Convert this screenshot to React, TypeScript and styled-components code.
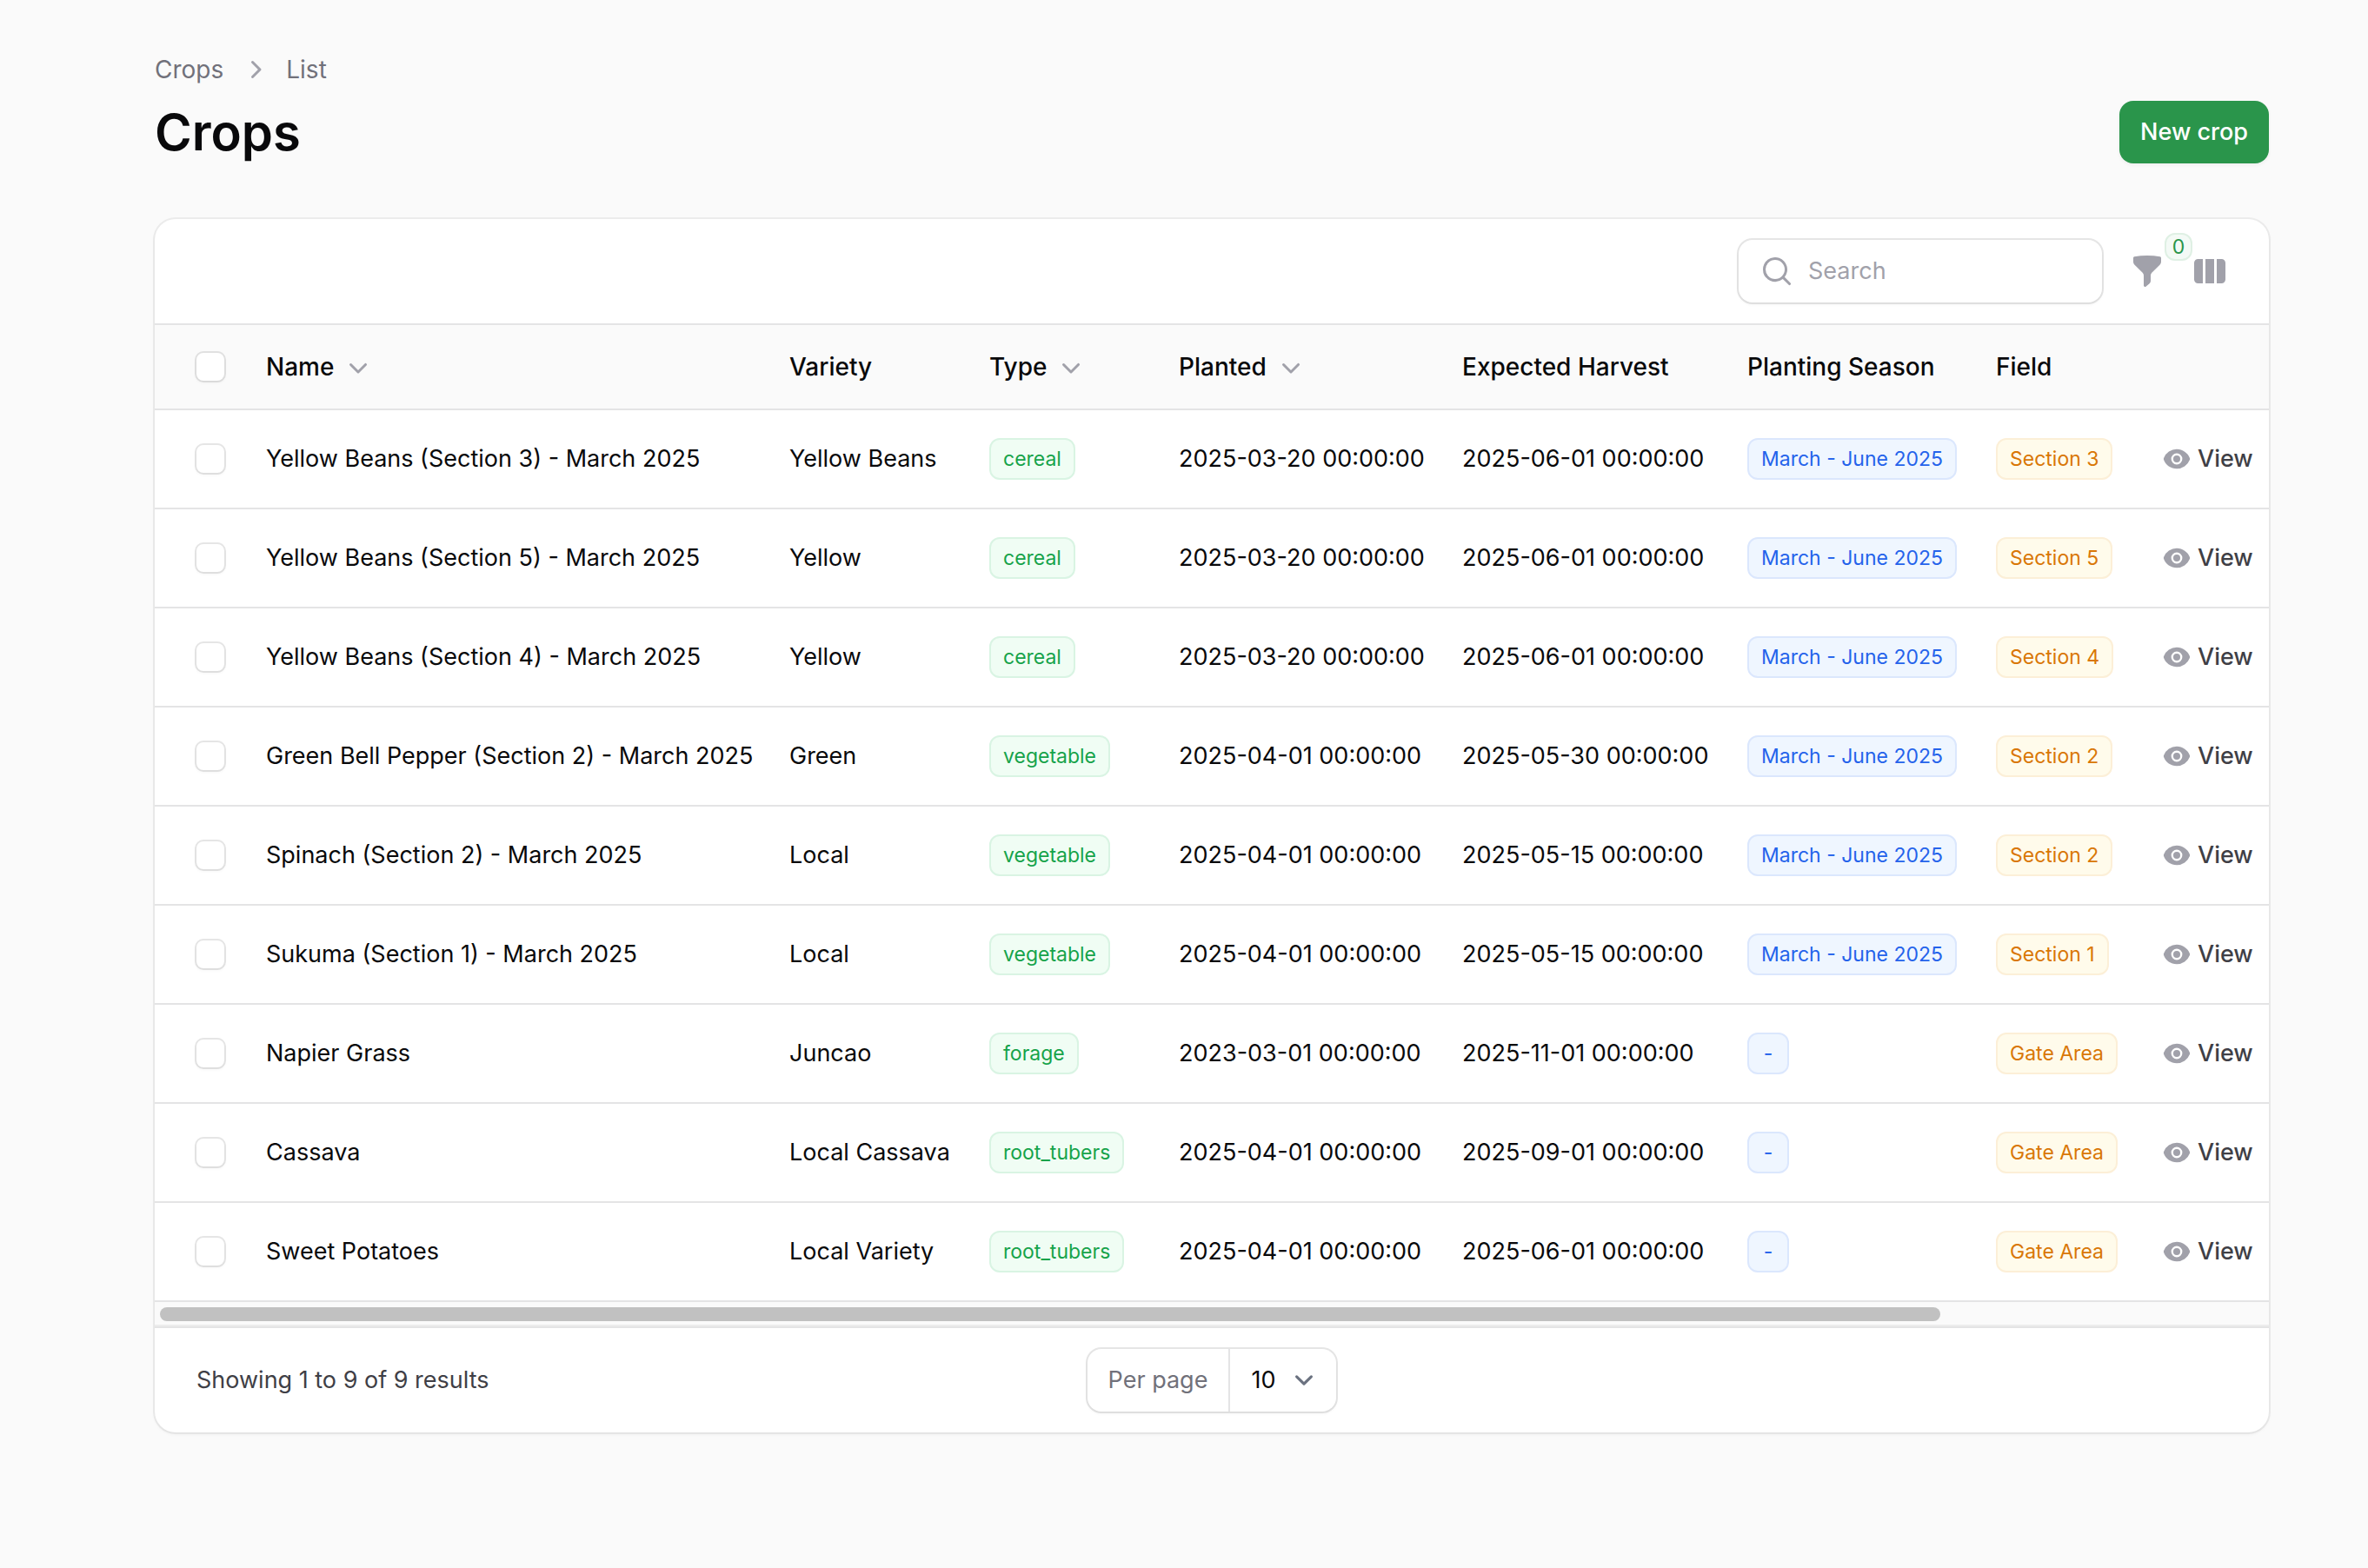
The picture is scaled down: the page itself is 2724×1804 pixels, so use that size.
import React, { useEffect, useRef, useState } from 'react';
import styled, { createGlobalStyle, css } from 'styled-components';

const ink = '#09090b';
const line = '#e4e4e5';
const muted = '#71717a';
const iconGray = '#a1a1aa';
const brand = '#2a954b';
const ring = '0 0 0 2px rgba(9, 9, 11, 0.1), 0 2px 4px rgba(0, 0, 0, 0.05)';

const GlobalStyle = createGlobalStyle`
  *, *::before, *::after { box-sizing: border-box; }
  body {
    margin: 0;
    background: #fafafa;
    color: ${ink};
    font-family: Inter, 'Liberation Sans', sans-serif;
    font-size: 27px;
    line-height: 40px;
  }
  button, input, select { font: inherit; color: inherit; }
  h1, ol { margin: 0; padding: 0; }
`;

const Page = styled.main`
  display: flex;
  flex-direction: column;
  gap: 64px;
  padding: 60px 114px 60px 178px;
`;

const PageHeader = styled.header`
  display: flex;
  align-items: flex-end;
  justify-content: space-between;
`;

const Heading = styled.div`
  display: flex;
  flex-direction: column;
  gap: 16px;
`;

const Breadcrumbs = styled.ol`
  display: flex;
  align-items: center;
  gap: 16px;
  list-style: none;
`;

const Crumb = styled.li`
  display: flex;
  align-items: center;
  gap: 16px;
`;

const CrumbLink = styled.a`
  color: ${muted};
  font-size: 28px;
  text-decoration: none;
`;

const Title = styled.h1`
  font-size: 58px;
  line-height: 72px;
  font-weight: 600;
`;

const PrimaryButton = styled.button`
  height: 72px;
  padding: 0 24px;
  border: 0;
  border-radius: 16px;
  background: ${brand};
  color: #fff;
  font-weight: 500;
  box-shadow: 0 2px 4px rgba(0, 0, 0, 0.05);
`;

const Card = styled.section`
  border-radius: 24px;
  background: #fff;
  overflow: hidden;
  box-shadow: 0 0 0 2px rgba(9, 9, 11, 0.06), 0 2px 4px rgba(0, 0, 0, 0.05);
`;

const Toolbar = styled.div`
  display: flex;
  align-items: center;
  justify-content: flex-end;
  gap: 32px;
  padding: 24px 48px;
  border-bottom: 2px solid ${line};
`;

const SearchBox = styled.label`
  display: flex;
  align-items: center;
  gap: 16px;
  width: 418px;
  height: 72px;
  padding: 0 24px;
  border-radius: 16px;
  box-shadow: ${ring};
`;

const SearchInput = styled.input`
  flex: 1;
  min-width: 0;
  padding: 0;
  border: 0;
  outline: 0;
  background: transparent;
  &::placeholder { color: ${iconGray}; opacity: 1; }
`;

const IconButton = styled.button`
  position: relative;
  display: flex;
  padding: 0;
  border: 0;
  background: transparent;
`;

const CountBadge = styled.span`
  position: absolute;
  left: 100%;
  bottom: 80%;
  min-width: 32px;
  height: 32px;
  border: 2px solid #dff0e4;
  border-radius: 12px;
  background: #f4faf6;
  color: ${brand};
  font-size: 23px;
  line-height: 28px;
  text-align: center;
`;

const Icon = styled.svg<{ $size?: number; $color?: string }>`
  flex: none;
  display: block;
  width: ${(p) => p.$size ?? 40}px;
  height: ${(p) => p.$size ?? 40}px;
  fill: ${(p) => p.$color ?? iconGray};
`;

const Scroller = styled.div`
  overflow-x: auto;
  scrollbar-width: none;
`;

const Table = styled.table`
  width: 2874px;
  table-layout: fixed;
  border-collapse: separate;
  border-spacing: 0;
`;

const Col = styled.col<{ $width?: number }>`
  ${(p) => p.$width && css`width: ${p.$width}px;`}
`;

const HeadCell = styled.th<{ $check?: boolean }>`
  height: 98px;
  padding: 0 24px;
  padding-left: ${(p) => (p.$check ? 48 : 24)}px;
  border-bottom: 2px solid ${line};
  background: #fafafa;
  font-size: 28px;
  font-weight: 500;
  text-align: left;
  white-space: nowrap;
`;

const SortButton = styled.button`
  display: flex;
  align-items: center;
  gap: 8px;
  padding: 0;
  border: 0;
  background: transparent;
`;

const Cell = styled.td<{ $check?: boolean }>`
  height: 114px;
  padding: 0 24px;
  padding-left: ${(p) => (p.$check ? 48 : 24)}px;
  border-bottom: 2px solid ${line};
  white-space: nowrap;
`;

const Checkbox = styled.input`
  appearance: none;
  display: block;
  width: 32px;
  height: 32px;
  margin: 0;
  border-radius: 8px;
  background: #fff;
  box-shadow: ${ring};
  &:checked { background: ${brand}; }
`;

type Tone = 'green' | 'blue' | 'amber';
const tones: Record<Tone, [string, string, string]> = {
  green: ['#16a34a', '#f0fdf4', '#d9f4e3'],
  blue: ['#2563eb', '#eff6ff', '#dbe7fd'],
  amber: ['#d97706', '#fffbeb', '#fcefd7'],
};

const Badge = styled.span<{ $tone: Tone }>`
  display: flex;
  align-items: center;
  justify-content: center;
  width: fit-content;
  min-width: 48px;
  height: 48px;
  padding: 0 14px;
  border: 2px solid ${(p) => tones[p.$tone][2]};
  border-radius: 12px;
  background: ${(p) => tones[p.$tone][1]};
  color: ${(p) => tones[p.$tone][0]};
  font-size: 23px;
`;

const ViewLink = styled.a`
  display: flex;
  width: fit-content;
  align-items: center;
  gap: 8px;
  color: #3f3f46;
  font-weight: 500;
  text-decoration: none;
`;

const ScrollTrack = styled.div`
  padding: 6px 6px 4px;
  border-bottom: 2px solid #ececec;
  background: #fafafa;
`;

const ScrollThumb = styled.div`
  height: 16px;
  border-radius: 8px;
  background: #c1c1c1;
`;

const Footer = styled.footer`
  display: grid;
  grid-template-columns: 1fr auto 1fr;
  align-items: center;
  padding: 24px 48px;
  border-top: 2px solid ${line};
`;

const Summary = styled.span`
  color: #3f3f46;
`;

const PerPage = styled.div`
  display: flex;
  height: 72px;
  border-radius: 16px;
  box-shadow: ${ring};
`;

const PerPageLabel = styled.label`
  display: flex;
  align-items: center;
  padding: 0 24px;
  border-right: 2px solid ${line};
  color: ${muted};
`;

const SelectWrap = styled.span`
  display: grid;
  align-items: center;
  justify-items: end;
  padding-right: 16px;
  & > * { grid-area: 1 / 1; }
  & > svg { pointer-events: none; }
`;

const Select = styled.select`
  appearance: none;
  width: 106px;
  height: 72px;
  padding: 0 0 0 24px;
  border: 0;
  outline: 0;
  background: transparent;
`;

const ChevronDown = () => (
  <Icon viewBox="0 0 20 20" aria-hidden="true">
    <path d="M5.22 8.22a.75.75 0 0 1 1.06 0L10 11.94l3.72-3.72a.75.75 0 1 1 1.06 1.06l-4.25 4.25a.75.75 0 0 1-1.06 0L5.22 9.28a.75.75 0 0 1 0-1.06Z" />
  </Icon>
);

const columns: { label: string; width?: number; sortable?: boolean }[] = [
  { label: 'Name', width: 602, sortable: true },
  { label: 'Variety', width: 230 },
  { label: 'Type', width: 218, sortable: true },
  { label: 'Planted', width: 326, sortable: true },
  { label: 'Expected Harvest', width: 328 },
  { label: 'Planting Season', width: 286 },
  { label: 'Field', width: 192 },
];

const season = 'March - June 2025';
const crops = [
  ['Yellow Beans (Section 3) - March 2025', 'Yellow Beans', 'cereal', '2025-03-20', '2025-06-01', season, 'Section 3'],
  ['Yellow Beans (Section 5) - March 2025', 'Yellow', 'cereal', '2025-03-20', '2025-06-01', season, 'Section 5'],
  ['Yellow Beans (Section 4) - March 2025', 'Yellow', 'cereal', '2025-03-20', '2025-06-01', season, 'Section 4'],
  ['Green Bell Pepper (Section 2) - March 2025', 'Green', 'vegetable', '2025-04-01', '2025-05-30', season, 'Section 2'],
  ['Spinach (Section 2) - March 2025', 'Local', 'vegetable', '2025-04-01', '2025-05-15', season, 'Section 2'],
  ['Sukuma (Section 1) - March 2025', 'Local', 'vegetable', '2025-04-01', '2025-05-15', season, 'Section 1'],
  ['Napier Grass', 'Juncao', 'forage', '2023-03-01', '2025-11-01', '-', 'Gate Area'],
  ['Cassava', 'Local Cassava', 'root_tubers', '2025-04-01', '2025-09-01', '-', 'Gate Area'],
  ['Sweet Potatoes', 'Local Variety', 'root_tubers', '2025-04-01', '2025-06-01', '-', 'Gate Area'],
];

export default function App() {
  const scroller = useRef<HTMLDivElement>(null);
  const [thumb, setThumb] = useState({ width: 85, left: 0 });

  // Keeps the thumb's length and place in step with the table's scroll state.
  const measure = () => {
    const el = scroller.current;
    if (!el) return;
    setThumb({
      width: (el.clientWidth / el.scrollWidth) * 100,
      left: (el.scrollLeft / el.scrollWidth) * 100,
    });
  };

  useEffect(() => {
    measure();
    window.addEventListener('resize', measure);
    return () => window.removeEventListener('resize', measure);
  }, []);

  return (
    <>
      <GlobalStyle />
      <Page>
        <PageHeader>
          <Heading>
            <nav aria-label="Breadcrumb">
              <Breadcrumbs>
                <Crumb>
                  <CrumbLink href="#crops">Crops</CrumbLink>
                </Crumb>
                <Crumb>
                  <Icon viewBox="0 0 20 20" aria-hidden="true">
                    <path d="M8.22 5.22a.75.75 0 0 1 1.06 0l4.25 4.25a.75.75 0 0 1 0 1.06l-4.25 4.25a.75.75 0 0 1-1.06-1.06L11.94 10 8.22 6.28a.75.75 0 0 1 0-1.06Z" />
                  </Icon>
                  <CrumbLink href="#list">List</CrumbLink>
                </Crumb>
              </Breadcrumbs>
            </nav>
            <Title>Crops</Title>
          </Heading>
          <PrimaryButton type="button">New crop</PrimaryButton>
        </PageHeader>

        <Card>
          <Toolbar>
            <SearchBox>
              <Icon viewBox="0 0 20 20" aria-hidden="true">
                <path
                  fillRule="evenodd"
                  d="M9 3.5a5.5 5.5 0 1 0 0 11 5.5 5.5 0 0 0 0-11ZM2 9a7 7 0 1 1 12.452 4.391l3.328 3.329a.75.75 0 1 1-1.06 1.06l-3.329-3.328A7 7 0 0 1 2 9Z"
                />
              </Icon>
              <SearchInput type="search" placeholder="Search" aria-label="Search" />
            </SearchBox>
            <IconButton type="button" aria-label="Filter">
              <Icon viewBox="0 0 20 20" aria-hidden="true">
                <path d="M2.628 1.601C5.028 1.206 7.49 1 10 1s4.973.206 7.372.601a.75.75 0 0 1 .628.74v2.288a2.25 2.25 0 0 1-.659 1.59l-4.682 4.683a2.25 2.25 0 0 0-.659 1.59v3.037c0 .684-.31 1.33-.844 1.757l-1.937 1.55A.75.75 0 0 1 8 18.25v-5.757a2.25 2.25 0 0 0-.659-1.591L2.659 6.22A2.25 2.25 0 0 1 2 4.629V2.34a.75.75 0 0 1 .628-.74Z" />
              </Icon>
              <CountBadge>0</CountBadge>
            </IconButton>
            <IconButton type="button" aria-label="Toggle columns">
              <Icon viewBox="0 0 20 20" aria-hidden="true">
                <path d="M14 17h2.75A2.25 2.25 0 0 0 19 14.75v-9.5A2.25 2.25 0 0 0 16.75 3H14v14ZM12.5 3h-5v14h5V3ZM3.25 3H6v14H3.25A2.25 2.25 0 0 1 1 14.75v-9.5A2.25 2.25 0 0 1 3.25 3Z" />
              </Icon>
            </IconButton>
          </Toolbar>

          <Scroller ref={scroller} onScroll={measure}>
            <Table>
              <colgroup>
                <Col $width={104} />
                {columns.map((c) => (
                  <Col key={c.label} $width={c.width} />
                ))}
                <Col />
              </colgroup>
              <thead>
                <tr>
                  <HeadCell $check>
                    <Checkbox type="checkbox" aria-label="Select all" />
                  </HeadCell>
                  {columns.map((c) => (
                    <HeadCell key={c.label} scope="col">
                      {c.sortable ? (
                        <SortButton type="button">
                          {c.label}
                          <ChevronDown />
                        </SortButton>
                      ) : (
                        c.label
                      )}
                    </HeadCell>
                  ))}
                  <HeadCell aria-label="Actions" />
                </tr>
              </thead>
              <tbody>
                {crops.map(([name, variety, type, planted, harvest, plantingSeason, field]) => (
                  <tr key={name}>
                    <Cell $check>
                      <Checkbox type="checkbox" aria-label={`Select ${name}`} />
                    </Cell>
                    <Cell>{name}</Cell>
                    <Cell>{variety}</Cell>
                    <Cell>
                      <Badge $tone="green">{type}</Badge>
                    </Cell>
                    <Cell>{planted} 00:00:00</Cell>
                    <Cell>{harvest} 00:00:00</Cell>
                    <Cell>
                      <Badge $tone="blue">{plantingSeason}</Badge>
                    </Cell>
                    <Cell>
                      <Badge $tone="amber">{field}</Badge>
                    </Cell>
                    <Cell>
                      <ViewLink href="#view">
                        <Icon $size={32} viewBox="0 0 20 20" aria-hidden="true">
                          <path d="M10 12.5a2.5 2.5 0 1 0 0-5 2.5 2.5 0 0 0 0 5Z" />
                          <path
                            fillRule="evenodd"
                            d="M.664 10.59a1.651 1.651 0 0 1 0-1.186A10.004 10.004 0 0 1 10 3c4.257 0 7.893 2.66 9.336 6.41.147.381.146.804 0 1.186A10.004 10.004 0 0 1 10 17c-4.257 0-7.893-2.66-9.336-6.41ZM14 10a4 4 0 1 1-8 0 4 4 0 0 1 8 0Z"
                          />
                        </Icon>
                        View
                      </ViewLink>
                    </Cell>
                  </tr>
                ))}
              </tbody>
            </Table>
          </Scroller>
          <ScrollTrack aria-hidden="true">
            <ScrollThumb style={{ width: `${thumb.width}%`, marginLeft: `${thumb.left}%` }} />
          </ScrollTrack>

          <Footer>
            <Summary>Showing 1 to 9 of 9 results</Summary>
            <PerPage>
              <PerPageLabel htmlFor="per-page">Per page</PerPageLabel>
              <SelectWrap>
                <Select id="per-page" defaultValue="10">
                  <option>5</option>
                  <option>10</option>
                  <option>25</option>
                  <option>50</option>
                </Select>
                <Icon $size={42} $color="none" viewBox="0 0 20 20" aria-hidden="true">
                  <path d="m6 8 4 4 4-4" stroke="#6b7280" strokeWidth="1.5" strokeLinecap="round" strokeLinejoin="round" />
                </Icon>
              </SelectWrap>
            </PerPage>
          </Footer>
        </Card>
      </Page>
    </>
  );
}
